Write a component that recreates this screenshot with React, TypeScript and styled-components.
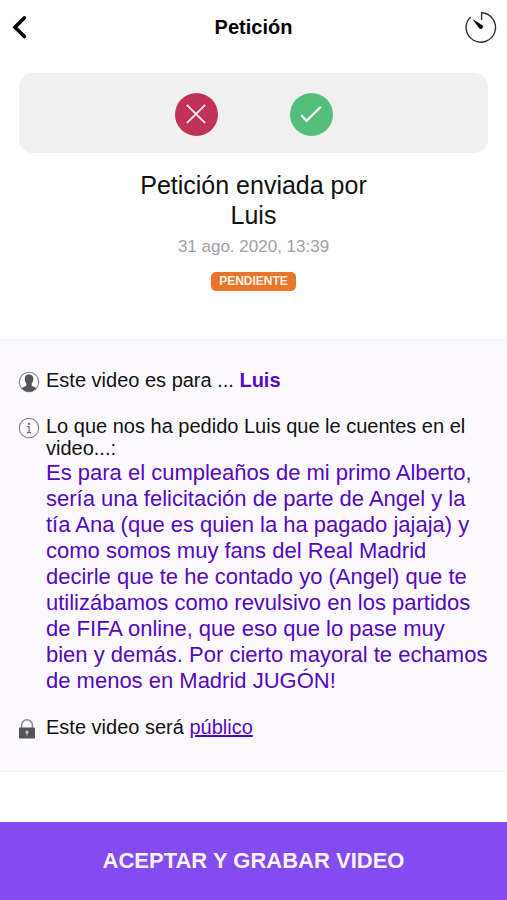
import React from "react";
import styled, { createGlobalStyle } from "styled-components";

const GlobalStyle = createGlobalStyle`
  *, *::before, *::after { box-sizing: border-box; }
  body {
    margin: 0;
    background: #fefefe;
    color: #111;
    font-family: "Liberation Sans", Arial, sans-serif;
  }
`;

const Page = styled.div`
  display: flex;
  flex-direction: column;
  min-height: 100vh;
`;

const Header = styled.header`
  display: grid;
  grid-template-columns: 40px 1fr 40px;
  align-items: center;
  height: 54px;
  padding: 0 7px;
`;

const Title = styled.h1`
  margin: 0;
  text-align: center;
  font-size: 20px;
  line-height: 24px;
  color: #000;
`;

const IconButton = styled.button<{ $end?: boolean }>`
  display: flex;
  align-items: center;
  justify-content: ${(p) => (p.$end ? "flex-end" : "flex-start")};
  height: 40px;
  padding: 0;
  border: 0;
  background: none;
  color: #000;
  cursor: pointer;
`;

const Actions = styled.div`
  display: flex;
  align-items: center;
  justify-content: center;
  gap: 72px;
  height: 80px;
  margin: 19px 19px 0;
  padding-top: 2px;
  border-radius: 14px;
  background: #f0f0f0;
`;

const RoundButton = styled.button<{ $color: string }>`
  display: flex;
  align-items: center;
  justify-content: center;
  width: 43px;
  height: 43px;
  padding: 0;
  border: 0;
  border-radius: 50%;
  background: ${(p) => p.$color};
  color: #fff;
  cursor: pointer;
`;

const Summary = styled.section`
  display: flex;
  flex-direction: column;
  align-items: center;
  padding: 17px 120px 48px;
  text-align: center;
`;

const Heading = styled.h2`
  margin: 0;
  font-size: 25px;
  line-height: 30px;
  font-weight: 400;
`;

const DateText = styled.time`
  margin-top: 7px;
  font-size: 17px;
  line-height: 20px;
  color: #a2a0a8;
`;

const Badge = styled.span`
  margin-top: 15px;
  padding: 0 8px 1px;
  border-radius: 5px;
  background: #e87529;
  color: #fff3e8;
  font-size: 12px;
  line-height: 18px;
  font-weight: 700;
`;

const Details = styled.section`
  display: flex;
  flex-direction: column;
  gap: 22px;
  padding: 28px 18px 30px;
  border-top: 2px solid #f4f3f5;
  border-bottom: 2px solid #f4f3f5;
  background: #fcfaff;
`;

const Row = styled.div`
  display: grid;
  grid-template-columns: 22px 1fr;
  column-gap: 6px;
  align-items: start;
`;

const RowIcon = styled.span`
  display: flex;
  padding-top: 2px;
`;

const Text = styled.p`
  margin: 0;
  font-size: 20px;
  line-height: 22px;
`;

const Name = styled.strong`
  color: #5508c0;
`;

const Message = styled.p`
  margin: 0;
  padding-top: 1px;
  font-size: 22px;
  line-height: 26px;
  color: #5508c0;
`;

const Link = styled.a`
  color: #5508c0;
  text-decoration: underline;
`;

const SubmitButton = styled.button`
  height: 78px;
  margin-top: auto;
  border: 0;
  background: #844bf0;
  color: #f9f3ff;
  font: 700 22px/26px "Liberation Sans", Arial, sans-serif;
  cursor: pointer;
`;

const BackIcon = () => (
  <svg width="24" height="26" viewBox="0 0 24 26" fill="none" aria-hidden="true">
    <path d="M17.4 3.8 8 13.2 17.4 22.6" stroke="currentColor" strokeWidth="3.6" strokeLinecap="round" strokeLinejoin="miter" />
  </svg>
);

const TimerIcon = () => (
  <svg width="36" height="36" viewBox="0 0 36 36" fill="none" aria-hidden="true">
    <path d="M17.6 11V3.8A14.7 14.7 0 1 1 6.6 7.9" stroke="#333" strokeWidth="1.4" />
    <path d="M9.4 11 18.4 16.6a2 2 0 0 1-2.7 2.8Z" fill="#000" stroke="#000" strokeWidth=".6" strokeLinejoin="round" />
  </svg>
);

const CrossIcon = () => (
  <svg width="24" height="24" viewBox="0 0 24 24" fill="none" aria-hidden="true">
    <path d="M2.8 2.8 21.2 21.2M21.2 2.8 2.8 21.2" stroke="#fbe9ec" strokeWidth="1.9" />
  </svg>
);

const CheckIcon = () => (
  <svg width="24" height="24" viewBox="0 0 24 24" fill="none" aria-hidden="true">
    <path d="m2.2 13 5.3 5.8L21.8 4.8" stroke="#fff" strokeWidth="2.3" />
  </svg>
);

const PersonIcon = () => (
  <svg width="22" height="22" viewBox="0 0 22 22" fill="none" aria-hidden="true">
    <circle cx="11" cy="11" r="9.7" fill="#fff" stroke="#8a888c" strokeWidth="1.1" />
    <path
      d="M11 3.6c2.9 0 4.5 1.7 4.3 4.6-.1 2.1-.9 3.4-1.6 4.3v2c.6 1.1 3.4 1.5 4.6 2.7A9.6 9.6 0 0 1 11 20.7a9.6 9.6 0 0 1-7.3-3.5c1.2-1.2 4-1.6 4.6-2.7v-2c-.7-.9-1.5-2.2-1.6-4.3-.2-2.9 1.4-4.6 4.3-4.6Z"
      fill="#55535a"
    />
  </svg>
);

const InfoIcon = () => (
  <svg width="22" height="22" viewBox="0 0 22 22" fill="none" aria-hidden="true">
    <circle cx="11" cy="11" r="9.7" stroke="#858388" strokeWidth="1.1" />
    <circle cx="11" cy="6.9" r="1.1" fill="#67656a" />
    <path d="M9.2 9.5h1.9v6M9 15.6h4.2" stroke="#67656a" strokeWidth="1.2" />
  </svg>
);

const LockIcon = () => (
  <svg width="18" height="22" viewBox="0 0 18 22" fill="none" aria-hidden="true">
    <path d="M3.6 10V7.2a5.4 5.4 0 0 1 10.8 0V10" stroke="#8b898e" strokeWidth="1.5" />
    <rect x="1" y="9.6" width="16" height="11" rx=".8" fill="#55535a" />
    <circle cx="9" cy="14" r="1.6" fill="#c9c7cc" />
    <path d="M9 14v3.6" stroke="#c9c7cc" strokeWidth="1" />
  </svg>
);

export default function App() {
  return (
    <Page>
      <GlobalStyle />
      <Header>
        <IconButton aria-label="Volver">
          <BackIcon />
        </IconButton>
        <Title>Petición</Title>
        <IconButton $end aria-label="Historial">
          <TimerIcon />
        </IconButton>
      </Header>
      <Actions>
        <RoundButton $color="#c23156" aria-label="Rechazar">
          <CrossIcon />
        </RoundButton>
        <RoundButton $color="#54bd7c" aria-label="Aceptar">
          <CheckIcon />
        </RoundButton>
      </Actions>
      <Summary>
        <Heading>Petición enviada por Luis</Heading>
        <DateText dateTime="2020-08-31T13:39">31 ago. 2020, 13:39</DateText>
        <Badge>PENDIENTE</Badge>
      </Summary>
      <Details>
        <Row>
          <RowIcon>
            <PersonIcon />
          </RowIcon>
          <Text>
            Este video es para ... <Name>Luis</Name>
          </Text>
        </Row>
        <Row>
          <RowIcon>
            <InfoIcon />
          </RowIcon>
          <div>
            <Text>Lo que nos ha pedido Luis que le cuentes en el video...:</Text>
            <Message>
              Es para el cumpleaños de mi primo Alberto, sería una felicitación de parte de Angel y la tía Ana (que es
              quien la ha pagado jajaja) y como somos muy fans del Real Madrid decirle que te he contado yo (Angel) que
              te utilizábamos como revulsivo en los partidos de FIFA online, que eso que lo pase muy bien y demás. Por
              cierto mayoral te echamos de menos en Madrid JUGÓN!
            </Message>
          </div>
        </Row>
        <Row>
          <RowIcon>
            <LockIcon />
          </RowIcon>
          <Text>
            Este video será <Link href="#publico">público</Link>
          </Text>
        </Row>
      </Details>
      <SubmitButton>ACEPTAR Y GRABAR VIDEO</SubmitButton>
    </Page>
  );
}
